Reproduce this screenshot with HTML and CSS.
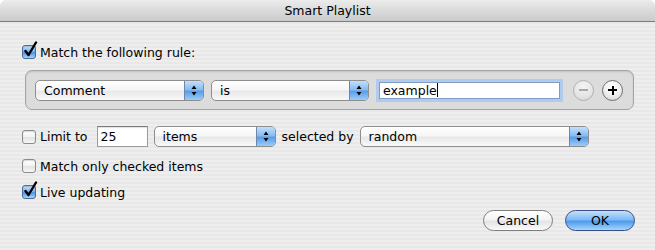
FILE: index.html
```html
<!DOCTYPE html>
<html>
<head>
<meta charset="utf-8">
<link rel="stylesheet" href="styles.css">
</head>
<body>
<div class="window">
  <div class="titlebar">Smart Playlist</div>
  <div class="content">
    <div class="row row-match">
      <span class="checkbox checked"><svg class="check" width="16" height="18" viewBox="0 0 16 18"><path d="M3.5 10 L6.5 14 L14 1.5" fill="none" stroke="#000" stroke-width="2.4" stroke-linecap="round" stroke-linejoin="round"/></svg></span>
      <span class="label">Match the following rule:</span>
    </div>

    <div class="rulebox">
      <div class="popup w-comment"><span class="popup-label">Comment</span><span class="popup-cap"><svg width="18" height="19" viewBox="0 0 18 19"><path d="M6.5 8 L9 4.5 L11.5 8Z M6.5 11 L9 14.5 L11.5 11Z" fill="#000"/></svg></span></div>
      <div class="popup w-is"><span class="popup-label">is</span><span class="popup-cap"><svg width="18" height="19" viewBox="0 0 18 19"><path d="M6.5 8 L9 4.5 L11.5 8Z M6.5 11 L9 14.5 L11.5 11Z" fill="#000"/></svg></span></div>
      <div class="field focus w-example"><span>example</span><span class="caret"></span></div>
      <div class="round minus"><span class="bar"></span></div>
      <div class="round plus"><span class="bar"></span><span class="bar vert"></span></div>
    </div>

    <div class="row row-limit">
      <span class="checkbox"></span>
      <span class="label">Limit to</span>
      <div class="field w-num"><span>25</span></div>
      <div class="popup w-items"><span class="popup-label">items</span><span class="popup-cap"><svg width="18" height="19" viewBox="0 0 18 19"><path d="M6.5 8 L9 4.5 L11.5 8Z M6.5 11 L9 14.5 L11.5 11Z" fill="#000"/></svg></span></div>
      <span class="label sel">selected by</span>
      <div class="popup w-random"><span class="popup-label">random</span><span class="popup-cap"><svg width="18" height="19" viewBox="0 0 18 19"><path d="M6.5 8 L9 4.5 L11.5 8Z M6.5 11 L9 14.5 L11.5 11Z" fill="#000"/></svg></span></div>
    </div>

    <div class="row row-only">
      <span class="checkbox"></span>
      <span class="label">Match only checked items</span>
    </div>

    <div class="row row-live">
      <span class="checkbox checked"><svg class="check" width="16" height="18" viewBox="0 0 16 18"><path d="M3.5 10 L6.5 14 L14 1.5" fill="none" stroke="#000" stroke-width="2.4" stroke-linecap="round" stroke-linejoin="round"/></svg></span>
      <span class="label">Live updating</span>
    </div>

    <div class="buttons">
      <div class="pushbtn cancel">Cancel</div>
      <div class="pushbtn ok">OK</div>
    </div>
  </div>
</div>
</body>
</html>
```

FILE: styles.css
```css
html, body {
  margin: 0;
  padding: 0;
  background: #ffffff;
}
body {
  font-family: "DejaVu Sans", "Liberation Sans", sans-serif;
  font-size: 12.5px;
  color: #000;
}
.window {
  width: 655px;
  height: 250px;
  overflow: hidden;
  border-radius: 6px 6px 0 0;
  background: repeating-linear-gradient(to bottom, #eeeeee 0, #eeeeee 2px, #e8e8e8 2px, #e8e8e8 4px);
}
.titlebar {
  height: 21px;
  line-height: 21px;
  text-align: center;
  font-size: 12.5px;
  background: linear-gradient(to bottom, #ececec 0%, #dadada 50%, #cbcbcb 100%);
  border-bottom: 1px solid #7c7c7c;
  border-radius: 6px 6px 0 0;
}
.content {
  padding-left: 22px;
  display: flex;
  flex-direction: column;
}
.row {
  display: flex;
  align-items: center;
}
.row-match { margin-top: 23px; height: 14px; }
.row-limit { margin-top: 16px; height: 21px; }
.row-only { margin-top: 12px; height: 14px; }
.row-live { margin-top: 12px; height: 14px; }

.label { margin-left: 4px; white-space: nowrap; }
.sel { margin-left: 6px; margin-right: 6px; }

.checkbox {
  position: relative;
  flex: none;
  width: 14px;
  height: 14px;
  box-sizing: border-box;
  border: 1px solid #8a8a8a;
  border-radius: 3px;
  background: linear-gradient(to bottom, #ffffff 0%, #f2f2f2 50%, #e2e2e2 55%, #f8f8f8 100%);
  box-shadow: inset 0 1px 1px rgba(0,0,0,0.15);
}
.checkbox.checked {
  border-color: #4a6c9b;
  background: linear-gradient(to bottom, #c6e0fb 0%, #7db6f0 45%, #4f95e4 55%, #a9d3fa 100%);
}
.check {
  position: absolute;
  left: -1px;
  top: -5px;
}

.rulebox {
  margin-top: 11px;
  margin-left: 3px;
  width: 609px;
  height: 40px;
  box-sizing: border-box;
  border: 1px solid #a4a4a4;
  border-radius: 7px;
  background: #dcdcdc;
  box-shadow: inset 0 1px 2px rgba(0,0,0,0.12);
  display: flex;
  align-items: center;
  padding-left: 9px;
}

.popup {
  flex: none;
  display: flex;
  align-items: stretch;
  height: 21px;
  box-sizing: border-box;
  border: 1px solid #8e8e8e;
  border-radius: 5px;
  background: linear-gradient(to bottom, #ffffff 0%, #f6f6f6 45%, #e8e8e8 55%, #f9f9f9 100%);
}
.popup-label {
  flex: 1;
  padding-left: 8px;
  line-height: 19px;
}
.popup-cap {
  width: 18px;
  border-left: 1px solid #6d87ab;
  border-radius: 0 4px 4px 0;
  background: linear-gradient(to bottom, #c3dffb 0%, #86bcf2 45%, #5a9ee8 55%, #9ccdf8 100%);
}
.popup-cap svg { display: block; }

.w-comment { width: 169px; margin-right: 7px; }
.w-is { width: 158px; margin-right: 7px; }
.w-items { width: 122px; margin-left: 6px; }
.w-random { width: 229px; }

.field {
  flex: none;
  display: flex;
  align-items: center;
  box-sizing: border-box;
  background: #ffffff;
  border: 1px solid #9c9c9c;
  border-top-color: #7b7b7b;
  box-shadow: inset 0 1px 1px rgba(0,0,0,0.12);
  padding-left: 3px;
}
.w-num {
  width: 51px;
  height: 21px;
  margin-left: 9px;
}
.field.focus {
  width: 181px;
  height: 17px;
  margin: 0 3px 0 3px;
  border-color: #7f9cc2;
  box-shadow: 0 0 0 3px #b0cbeb;
}
.caret {
  width: 1px;
  height: 14px;
  background: #000;
}

.round {
  flex: none;
  position: relative;
  width: 21px;
  height: 21px;
  box-sizing: border-box;
  border-radius: 50%;
  border: 1px solid #6e6e6e;
  background: radial-gradient(circle at 50% 30%, #ffffff 0%, #f0f0f0 50%, #d0d0d0 100%);
}
.minus {
  margin-left: 10px;
  border-color: #b0b0b0;
  background: radial-gradient(circle at 50% 30%, #f4f4f4 0%, #e6e6e6 55%, #d4d4d4 100%);
}
.plus { margin-left: 8px; }
.bar {
  position: absolute;
  left: 5px;
  top: 8.5px;
  width: 9px;
  height: 2px;
  background: #000;
}
.minus .bar { background: #a8a8a8; }
.bar.vert {
  left: 8.5px;
  top: 5px;
  width: 2px;
  height: 9px;
}

.buttons {
  margin-top: 11px;
  display: flex;
  justify-content: flex-end;
  padding-right: 20px;
  gap: 12px;
}
.pushbtn {
  width: 70px;
  height: 21px;
  box-sizing: border-box;
  border-radius: 11px;
  text-align: center;
  line-height: 19px;
}
.cancel {
  border: 1px solid #7e7e7e;
  background: linear-gradient(to bottom, #ffffff 0%, #f4f4f4 45%, #e4e4e4 55%, #fafafa 100%);
}
.ok {
  border: 1px solid #3b4f86;
  background: linear-gradient(to bottom, #c4e0fc 0%, #7ebaf4 45%, #4f9bec 55%, #a4d6fc 100%);
}
```
